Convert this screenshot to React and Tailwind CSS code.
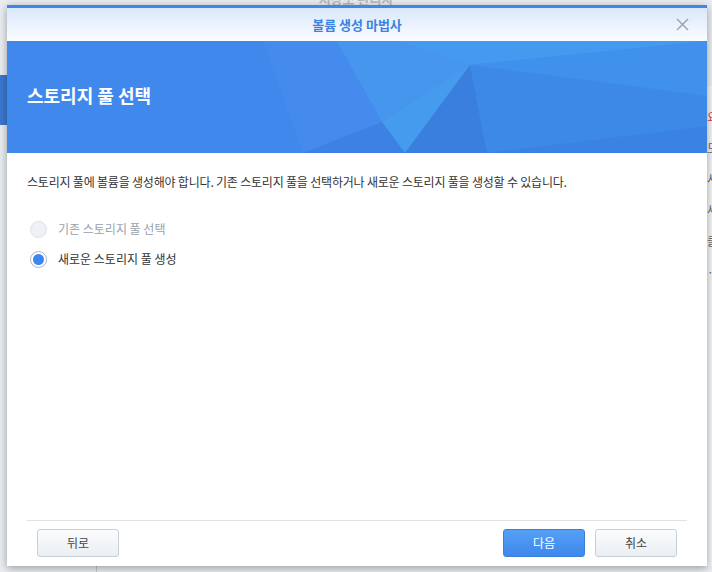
const FONT = { fontFamily: '"Noto Sans CJK KR", "Noto Sans", sans-serif' };

const Banner = () => (
    <div className="relative h-[112px] bg-[#4088ec] overflow-hidden">
        <svg
            className="absolute inset-0"
            width="700"
            height="112"
            viewBox="0 0 700 112"
        >
            <polygon points="256,0 330,0 375,81 296,112" fill="#4a91ef" opacity="0.45" />
            <polygon points="330,0 390,0 463,24 375,81" fill="#4a9cf0" opacity="0.7" />
            <polygon points="390,0 700,0 463,24" fill="#47a0f2" opacity="0.75" />
            <polygon points="463,24 700,0 700,55" fill="#3f93ec" opacity="0.8" />
            <polygon points="375,81 463,24 398,112" fill="#4ab0f2" opacity="0.5" />
            <polygon points="296,112 375,81 398,112" fill="#3a7fe0" opacity="0.7" />
            <polygon points="398,112 463,24 480,112" fill="#3a7ddd" opacity="0.9" />
            <polygon points="463,24 700,55 700,85 480,112" fill="#3c8ae6" opacity="0.85" />
            <polygon points="480,112 700,85 700,112" fill="#3a82e2" opacity="0.9" />
        </svg>
        <div className="relative flex h-full items-center pl-5 pb-1">
            <h1 className="text-[18px] font-bold text-white">스토리지 풀 선택</h1>
        </div>
    </div>
);

const Radio = ({ label, checked, disabled }) => (
    <label className="flex items-center gap-[11px] h-[30px]">
        <span
            className={
                disabled
                    ? "w-[17px] h-[17px] rounded-full bg-[#eef1f5] border border-[#dde2e8]"
                    : "w-[17px] h-[17px] rounded-full bg-white border border-[#a9b3c0] flex items-center justify-center"
            }
        >
            {checked && <span className="w-[11px] h-[11px] rounded-full bg-[#3c86ef]" />}
        </span>
        <span className={disabled ? "text-[12px] text-[#9aa1ab]" : "text-[12px] text-[#333]"}>
            {label}
        </span>
    </label>
);

const Button = ({ children, primary }) => (
    <button
        className={
            primary
                ? "w-[82px] h-[28px] rounded-[3px] border border-[#3a7fdc] bg-gradient-to-b from-[#55a0f6] to-[#3d88ec] text-white text-[12px]"
                : "w-[82px] h-[28px] rounded-[3px] border border-[#c6cfda] bg-gradient-to-b from-[#fbfcfd] to-[#eaeef3] text-[#444] text-[12px]"
        }
    >
        {children}
    </button>
);

export default function App() {
    return (
        <div className="relative w-[712px] h-[572px] overflow-hidden bg-[#e9ecf0]" style={FONT}>
            {/* background app */}
            <div className="flex justify-center h-[5px] overflow-hidden">
                <span className="text-[13px] font-bold text-[#b5b9be] leading-none -mt-[8px]">저장소 관리자</span>
            </div>
            <div className="absolute left-0 top-[75px] w-[7px] h-[50px] bg-[#3a78d0]" />
            <div className="absolute right-0 top-[86px] w-[5px] h-[480px] bg-[#f3f4f6] flex flex-col gap-[19px] pt-[25px] text-[12px] text-[#666] leading-none overflow-hidden">
                <span className="text-[#d44]">요</span>
                <span>도</span>
                <span>사</span>
                <span>세</span>
                <span>클</span>
                <span>·</span>
            </div>
            <div className="absolute left-[96px] top-[560px] w-px h-[12px] bg-[#c4c8cd]" />

            {/* dialog */}
            <div className="absolute left-[7px] top-[5px] w-[700px] h-[561px] bg-white flex flex-col shadow-[0_2px_8px_rgba(0,0,0,0.35)]">
                <div className="h-[3px] bg-[#3f86e8]" />
                <div className="relative h-[33px] flex items-center justify-center bg-gradient-to-b from-[#d9e8fb] to-[#fbfdff]">
                    <span className="text-[13px] font-bold text-[#3c82e0]">볼륨 생성 마법사</span>
                    <svg className="absolute right-[18px] top-[10px]" width="13" height="13" viewBox="0 0 13 13">
                        <path d="M1 1L12 12M12 1L1 12" stroke="#9aa0a8" strokeWidth="1.4" />
                    </svg>
                </div>
                <Banner />
                <div className="flex-1 px-5 pt-[20px]">
                    <p className="text-[12px] text-[#333] tracking-[-0.2px]">
                        스토리지 풀에 볼륨을 생성해야 합니다. 기존 스토리지 풀을 선택하거나 새로운 스토리지 풀을 생성할 수 있습니다.
                    </p>
                    <div className="mt-[23px] pl-[3px] flex flex-col">
                        <Radio label="기존 스토리지 풀 선택" disabled />
                        <Radio label="새로운 스토리지 풀 생성" checked />
                    </div>
                </div>
                <div className="mx-5 border-t border-[#dfe3e8]" />
                <div className="flex items-center px-[30px] pt-[8px] pb-[9px]">
                    <Button>뒤로</Button>
                    <div className="flex-1" />
                    <div className="flex gap-[10px]">
                        <Button primary>다음</Button>
                        <Button>취소</Button>
                    </div>
                </div>
            </div>
        </div>
    );
}
